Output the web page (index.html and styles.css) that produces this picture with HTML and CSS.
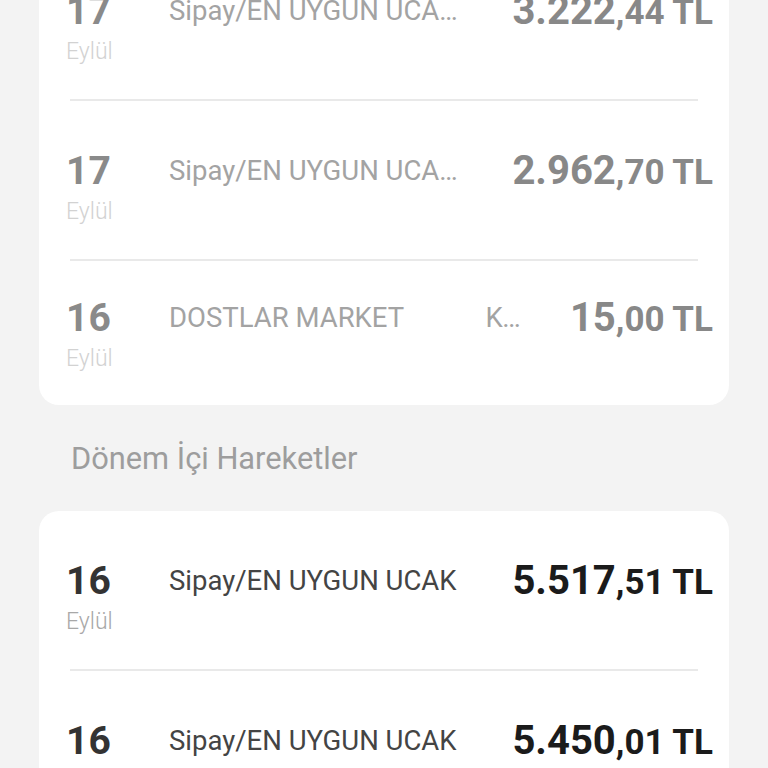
FILE: index.html
```html
<!DOCTYPE html>
<html lang="tr">
<head>
<meta charset="utf-8">
<title>Hareketler</title>
<link rel="stylesheet" href="styles.css">
</head>
<body>
<div class="screen">
  <section class="card card--past">
    <div class="row">
      <div class="day">17</div>
      <div class="desc">Sipay/EN UYGUN UCAKBILETI ISTANBUL</div>
      <div class="amount"><span class="int">3.222</span><span class="dec">,44 TL</span></div>
      <div class="month">Eylül</div>
    </div>
    <div class="sep"></div>
    <div class="row">
      <div class="day">17</div>
      <div class="desc">Sipay/EN UYGUN UCAKBILETI ISTANBUL</div>
      <div class="amount"><span class="int">2.962</span><span class="dec">,70 TL</span></div>
      <div class="month">Eylül</div>
    </div>
    <div class="sep"></div>
    <div class="row row--tight">
      <div class="day">16</div>
      <div class="desc">DOSTLAR MARKET            KONYA</div>
      <div class="amount"><span class="int">15</span><span class="dec">,00 TL</span></div>
      <div class="month">Eylül</div>
    </div>
  </section>

  <h2 class="section-title">Dönem İçi Hareketler</h2>

  <section class="card">
    <div class="row">
      <div class="day">16</div>
      <div class="desc">Sipay/EN UYGUN UCAK</div>
      <div class="amount"><span class="int">5.517</span><span class="dec">,51 TL</span></div>
      <div class="month">Eylül</div>
    </div>
    <div class="sep"></div>
    <div class="row">
      <div class="day">16</div>
      <div class="desc">Sipay/EN UYGUN UCAK</div>
      <div class="amount"><span class="int">5.450</span><span class="dec">,01 TL</span></div>
      <div class="month">Eylül</div>
    </div>
  </section>
</div>
</body>
</html>
```

FILE: styles.css
```css
html, body {
  margin: 0;
  padding: 0;
  background: #f3f3f3;
  height: 100%;
  overflow: hidden;
}

body {
  font-family: Roboto, "Noto Sans", "Liberation Sans", sans-serif;
}

.screen {
  margin-top: -59px;
  padding: 0 39px;
}

.card {
  background: #ffffff;
  border-radius: 20px;
  overflow: hidden;
}

.row {
  display: grid;
  grid-template-columns: 103px minmax(0, 1fr) auto;
  grid-template-rows: 44px 26px;
  row-gap: 6px;
  align-items: center;
  padding: 48px 16px 34px 27px;
}

.row--tight {
  padding-top: 35px;
  padding-bottom: 33px;
}

.day {
  grid-column: 1;
  grid-row: 1;
  font-size: 39px;
  line-height: 44px;
  font-weight: 700;
  color: #333333;
}

.desc {
  grid-column: 2;
  grid-row: 1;
  font-size: 27.5px;
  line-height: 44px;
  color: #444444;
  white-space: pre;
  overflow: hidden;
  text-overflow: ellipsis;
  margin-right: 46px;
}

.amount {
  grid-column: 3;
  grid-row: 1;
  font-size: 40px;
  line-height: 44px;
  font-weight: 700;
  color: #1b1b1b;
  white-space: nowrap;
  text-align: right;
  padding-top: 2px;
}

.int {
  font-size: 40px;
}

.dec {
  font-size: 35px;
}

.month {
  grid-column: 1;
  grid-row: 2;
  font-size: 23px;
  line-height: 26px;
  font-weight: 300;
  color: #a8a8a8;
}

.sep {
  height: 2px;
  margin: 0 31px;
  background: #e9e9e9;
}

.card--past .day { color: #8a8a8a; }
.card--past .desc { color: #a3a3a3; }
.card--past .amount { color: #888888; }
.card--past .month { color: #d2d2d2; }

.section-title {
  margin: 37px 0 35px 32px;
  font-size: 30.8px;
  line-height: 34px;
  font-weight: 400;
  color: #9d9d9d;
}
```
